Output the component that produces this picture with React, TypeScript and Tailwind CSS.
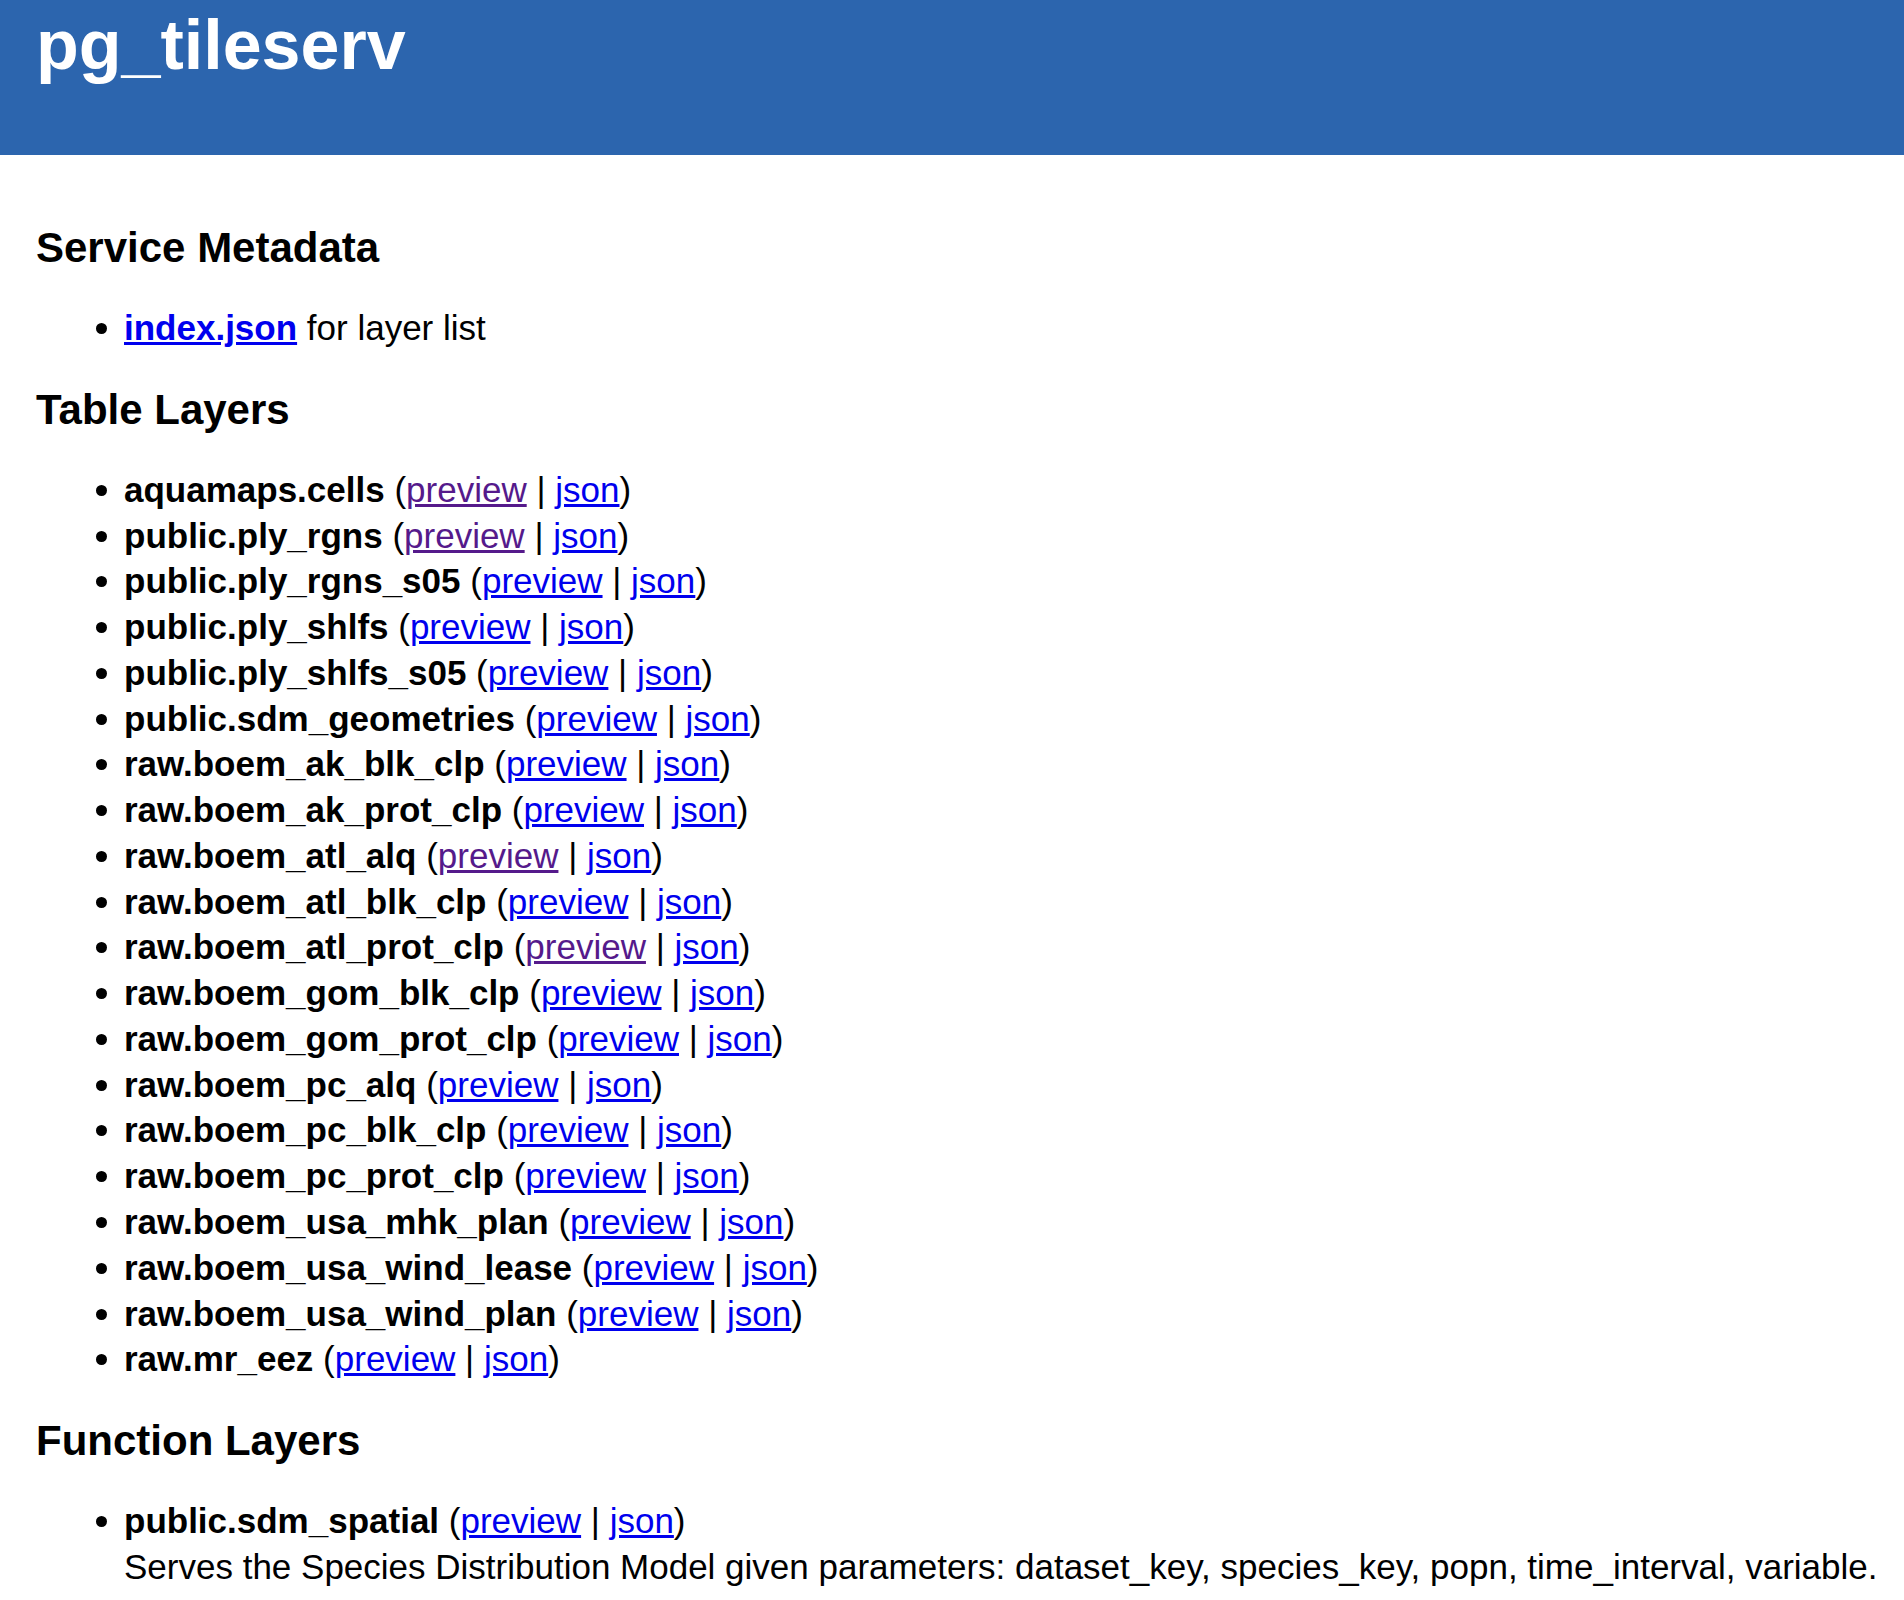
import React from "react";

type Row = { name: string; visited?: boolean };

const rows: Row[] = [
  { name: "aquamaps.cells", visited: true },
  { name: "public.ply_rgns", visited: true },
  { name: "public.ply_rgns_s05" },
  { name: "public.ply_shlfs" },
  { name: "public.ply_shlfs_s05" },
  { name: "public.sdm_geometries" },
  { name: "raw.boem_ak_blk_clp" },
  { name: "raw.boem_ak_prot_clp" },
  { name: "raw.boem_atl_alq", visited: true },
  { name: "raw.boem_atl_blk_clp" },
  { name: "raw.boem_atl_prot_clp", visited: true },
  { name: "raw.boem_gom_blk_clp" },
  { name: "raw.boem_gom_prot_clp" },
  { name: "raw.boem_pc_alq" },
  { name: "raw.boem_pc_blk_clp" },
  { name: "raw.boem_pc_prot_clp" },
  { name: "raw.boem_usa_mhk_plan" },
  { name: "raw.boem_usa_wind_lease" },
  { name: "raw.boem_usa_wind_plan" },
  { name: "raw.mr_eez" },
];

function Item({ children }: { children: React.ReactNode }) {
  return (
    <li className="flex text-[35px] leading-[45.76px]">
      <span className="w-[28px] shrink-0 pt-[18px]">
        <span className="block w-[11px] h-[11px] rounded-full bg-black" />
      </span>
      <div className="whitespace-nowrap">{children}</div>
    </li>
  );
}

function LayerLinks({ visited }: { visited?: boolean }) {
  return (
    <>
      {" ("}
      <a
        href="#"
        className={visited ? "text-[#551a8b] underline" : "text-[#0000ee] underline"}
      >
        preview
      </a>
      {" | "}
      <a href="#" className="text-[#0000ee] underline">
        json
      </a>
      {")"}
    </>
  );
}

export default function App() {
  return (
    <div className="[font-family:'Liberation_Sans',Arial,Helvetica,sans-serif] text-black bg-white min-h-[1600px]">
      <header className="h-[155px] bg-[#2c65ae] pl-[36px] pt-[5px]">
        <h1 className="text-[70px] leading-[80px] font-bold text-white">pg_tileserv</h1>
      </header>
      <main className="pl-[36px] pt-[69px]">
        <h2 className="text-[42px] leading-[48px] font-bold mb-[33px]">Service Metadata</h2>
        <ul className="mb-[35px] pl-[60px]">
          <Item>
            <a href="#" className="font-bold text-[#0000ee] underline">
              index.json
            </a>{" "}
            for layer list
          </Item>
        </ul>

        <h2 className="text-[42px] leading-[48px] font-bold mb-[33px]">Table Layers</h2>
        <ul className="mb-[35px] pl-[60px]">
          {rows.map((r) => (
            <Item key={r.name}>
              <b className="font-bold">{r.name}</b>
              <LayerLinks visited={r.visited} />
            </Item>
          ))}
        </ul>

        <h2 className="text-[42px] leading-[48px] font-bold mb-[33px]">Function Layers</h2>
        <ul className="pl-[60px]">
          <Item>
            <b className="font-bold">public.sdm_spatial</b>
            <LayerLinks />
            <br />
            Serves the Species Distribution Model given parameters: dataset_key, species_key, popn,
            time_interval, variable.
          </Item>
        </ul>
      </main>
    </div>
  );
}
